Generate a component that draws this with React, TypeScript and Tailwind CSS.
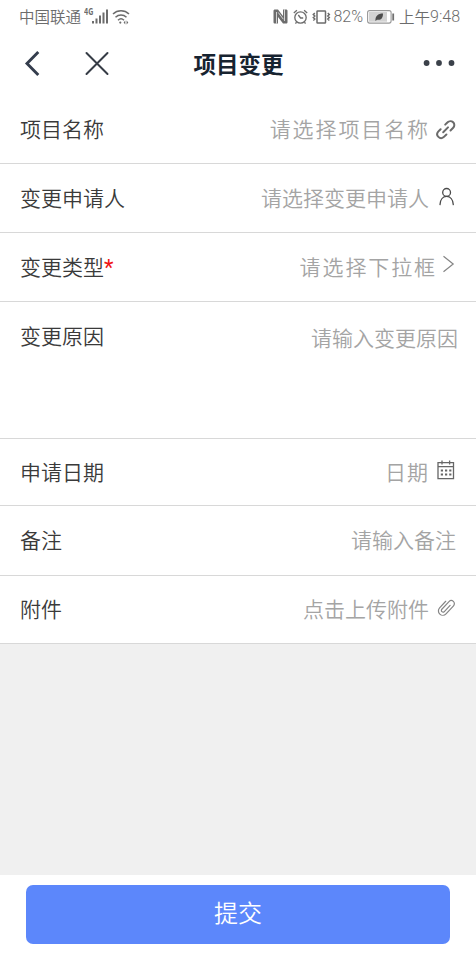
import type { ReactNode } from 'react';

interface FormRowProps {
  label: string;
  placeholder: string;
  rowClass: string;
  placeholderClass: string;
  required?: boolean;
  icon?: ReactNode;
}

function LinkIcon() {
  return (
    <svg width="20" height="20" viewBox="0 0 20 20" fill="none" stroke="#6b6b6b" strokeWidth="2" strokeLinecap="round">
      <path d="m9.2 4.6 2.4-2.3a3.9 3.9 0 0 1 5.6 5.5l-2.7 2.7" />
      <path d="m4.6 9.2-2.4 2.4a3.9 3.9 0 0 0 5.5 5.5l2.7-2.6" />
      <path d="m7.2 12.2 4.8-4.8" />
    </svg>
  );
}

function PersonIcon() {
  return (
    <svg width="20" height="20" viewBox="0 0 20 20" fill="none" stroke="#4a4a4a" strokeWidth="1.3" strokeLinecap="round">
      <circle cx="10.6" cy="5.4" r="3.9" />
      <path d="M4 17.6C4.2 12.6 7 9.4 10.6 9.4s6.4 3.2 6.7 8.2" />
    </svg>
  );
}

function ArrowIcon() {
  return (
    <svg width="20" height="20" viewBox="0 0 20 20" fill="none" stroke="#858585" strokeWidth="1.2">
      <path d="m7.5 2.3 9.7 7.7-9.7 7.7" />
    </svg>
  );
}

function CalendarIcon() {
  return (
    <svg width="20" height="20" viewBox="0 0 20 20" fill="none" stroke="#666" strokeWidth="1.3">
      <path d="M2 2.6h15.5v16H2zM2 6.6h15.5M6 .5v4M13.6 .5v4" />
      <path d="M4.8 10.5h10.6M4.8 14.5h10.6" strokeWidth="2" strokeDasharray="2.2 2" />
    </svg>
  );
}

function ClipIcon() {
  return (
    <svg width="20" height="20" viewBox="0 0 20 20" fill="none" stroke="#858585" strokeWidth="1.2" strokeLinecap="round">
      <path
        transform="rotate(43 10 10)"
        d="M11.9 6v8.5a1.7 1.7 0 0 1-3.4 0V4a3 3 0 0 1 6.2 0v11a4.3 4.3 0 0 1-8.8 0V6"
      />
    </svg>
  );
}

function FormRow({ label, placeholder, rowClass, placeholderClass, required, icon }: FormRowProps) {
  return (
    <div className={`flex shrink-0 justify-between border-b-[1.5px] border-[#d8d8d8] bg-white pl-5 text-[21px] leading-7 ${rowClass}`}>
      <label className="text-[#3a3a3a]">
        {label}
        {required && <span className="font-[Roboto] text-[22px] leading-none font-normal text-[#f01414]">*</span>}
      </label>
      <div className="flex">
        <span className={`text-[#a4a4a4] ${placeholderClass}`}>{placeholder}</span>
        {icon}
      </div>
    </div>
  );
}

function StatusBar() {
  return (
    <div className="flex h-8 shrink-0 items-center justify-between pt-px pr-[16px] pl-[19px] text-[15.5px] text-[#6c6c6c]">
      <div className="flex items-center">
        <span>中国联通</span>
        <span className="mb-[9px] ml-[3px] w-[8px] origin-left scale-x-75 text-[9.5px] leading-none font-bold">4G</span>
        <svg width="17" height="16" viewBox="0 0 17 16" fill="#6c6c6c">
          <path d="M0 12h2v2.5H0zM3.5 9.500h2v5h-2zM7 6.500h2v8H7zM10.5 3.500h2v11h-2zM14 .5h2v14h-2z" />
        </svg>
        <svg className="ml-[3px]" width="18" height="16" viewBox="0 0 18 16" fill="none" stroke="#6c6c6c" strokeWidth="1.5">
          <path d="M1 5c4.5-4.3 11.5-4.3 16 0M3.5 8.2c3.2-3 7.8-3 11 0M6 11.2c1.8-1.7 4.2-1.7 6 0" />
          <circle cx="8.3" cy="13.6" r="1.1" fill="#6c6c6c" stroke="none" />
          <path d="m13.3 11.6-1.7 2 1.7 2zM14.6 11.6l1.7 2-1.7 2z" fill="#6c6c6c" stroke="none" />
        </svg>
      </div>
      <div className="flex items-center">
        <svg width="15" height="15" viewBox="0 0 15 15">
          <path d="M.5 2C.5 1 1 .5 2 .5h3l5 6.5V.5h3c1 0 1.5.5 1.5 1.5v11c0 1-.5 1.5-1.5 1.5h-3L5 8v6.5H2c-1 0-1.500-.5-1.500-1.500z" fill="#6c6c6c" />
          <path d="M3.5 3v11.5M11.5.5V12M5.300 3.500l5 6.700" stroke="#fff" strokeWidth=".7" />
        </svg>
        <svg className="ml-[5px]" width="15" height="16" viewBox="0 0 15 16" fill="none" stroke="#6c6c6c" strokeWidth="1.3">
          <circle cx="7.5" cy="8.5" r="5.7" />
          <path d="M.8 4 3.9 1.2M14.2 4l-3.1-2.8M5.3 6l2.3 3h2.6M3.5 13.2l-1 1.5M11.5 13.2l1 1.5" />
        </svg>
        <svg className="ml-[3px]" width="20" height="16" viewBox="0 0 20 16" fill="none" stroke="#6c6c6c" strokeWidth="1.5">
          <rect x="6" y="2" width="8.5" height="12" rx=".6" />
          <path d="m3.8 4-1.5 1.5L3.8 7 2.3 8.5 3.8 10l-1.5 1.5M16.8 4l1.5 1.5L16.8 7l1.5 1.5-1.5 1.5 1.5 1.5" />
        </svg>
        <span className="ml-[2px] font-[Roboto] text-[16px]">82%</span>
        <svg className="ml-1" width="28" height="14" viewBox="0 0 28 14">
          <rect x=".6" y=".6" width="23.5" height="12.5" rx="2" fill="#fff" stroke="#989898" strokeWidth="1.1" />
          <rect x="2" y="2" width="18" height="9.7" fill="#d2d2d2" />
          <path d="M8.5 11c-.5-5 2.5-7.5 7.5-7.5 0 4.5-2 7-6 6.2z" fill="#4c4c4c" />
          <path d="M25.3 3.5h1.8v7h-1.800z" fill="#707070" />
        </svg>
        <span className="ml-1 flex items-center">
          上午<span className="font-[Roboto] text-[16px]">9:48</span>
        </span>
      </div>
    </div>
  );
}

function NavBar() {
  return (
    <div className="grid h-[62px] shrink-0 grid-cols-3 items-center pr-[20px] pl-[24px]">
      <div className="flex items-center">
        <svg width="18" height="28" viewBox="0 0 18 28" fill="none" stroke="#343d4d" strokeWidth="2.9">
          <path d="M14.3 3 3 14.5l11.3 11.5" />
        </svg>
        <svg className="ml-[42px]" width="26" height="26" viewBox="0 0 26 26" fill="none" stroke="#363c46" strokeWidth="2" strokeLinecap="round">
          <path d="m2.500 3 21 21M23.500 3l-21 21" />
        </svg>
      </div>
      <h1 className="-ml-[3px] text-center text-[22.5px] leading-8 font-bold whitespace-nowrap text-[#172330]">项目变更</h1>
      <svg className="justify-self-end" width="33" height="8" viewBox="0 0 33 8" fill="#3b414a">
        <circle cx="3.6" cy="4" r="2.9" />
        <circle cx="16" cy="4" r="2.9" />
        <circle cx="28.5" cy="4" r="2.9" />
      </svg>
    </div>
  );
}

export default function App() {
  return (
    <div className="flex h-[953px] w-full flex-col bg-[#f0f0f0] font-['Noto_Sans_CJK_SC',sans-serif] font-[350]">
      <header className="bg-white">
        <StatusBar />
        <NavBar />
      </header>
      <main className="flex flex-1 flex-col">
        <FormRow
          label="项目名称"
          placeholder="请选择项目名称"
          rowClass="h-[70px] pr-5 pt-5"
          placeholderClass="mr-[6px] tracking-[1.9px]"
          icon={<div className="pt-[6px]"><LinkIcon /></div>}
        />
        <FormRow
          label="变更申请人"
          placeholder="请选择变更申请人"
          rowClass="h-[69px] pr-5 pt-[19px]"
          placeholderClass="mr-[7px]"
          icon={<div className="pt-1"><PersonIcon /></div>}
        />
        <FormRow
          label="变更类型"
          required
          placeholder="请选择下拉框"
          rowClass="h-[69px] pr-5 pt-[19px]"
          placeholderClass="-mr-[1px] tracking-[1.9px]"
          icon={<div className="pt-[2px]"><ArrowIcon /></div>}
        />
        <FormRow
          label="变更原因"
          placeholder="请输入变更原因"
          rowClass="h-[137px] pr-[18px] pt-[19px]"
          placeholderClass="pt-[2px]"
        />
        <FormRow
          label="申请日期"
          placeholder="日期"
          rowClass="h-[67px] pr-5 pt-[18px]"
          placeholderClass="mr-[7px] tracking-[1px]"
          icon={<div className="pt-[3px]"><CalendarIcon /></div>}
        />
        <FormRow
          label="备注"
          placeholder="请输入备注"
          rowClass="h-[70px] pr-5 pt-[19px]"
          placeholderClass=""
        />
        <FormRow
          label="附件"
          placeholder="点击上传附件"
          rowClass="h-[68px] pr-5 pt-[18px]"
          placeholderClass="mr-[7px]"
          icon={<div className="pt-[3px]"><ClipIcon /></div>}
        />
      </main>
      <footer className="h-[78px] shrink-0 bg-white px-[26px] pt-[10px]">
        <button className="h-[59px] w-full rounded-[7px] bg-[#5c87fb] pb-[5px] text-[24px] text-white">提交</button>
      </footer>
    </div>
  );
}
